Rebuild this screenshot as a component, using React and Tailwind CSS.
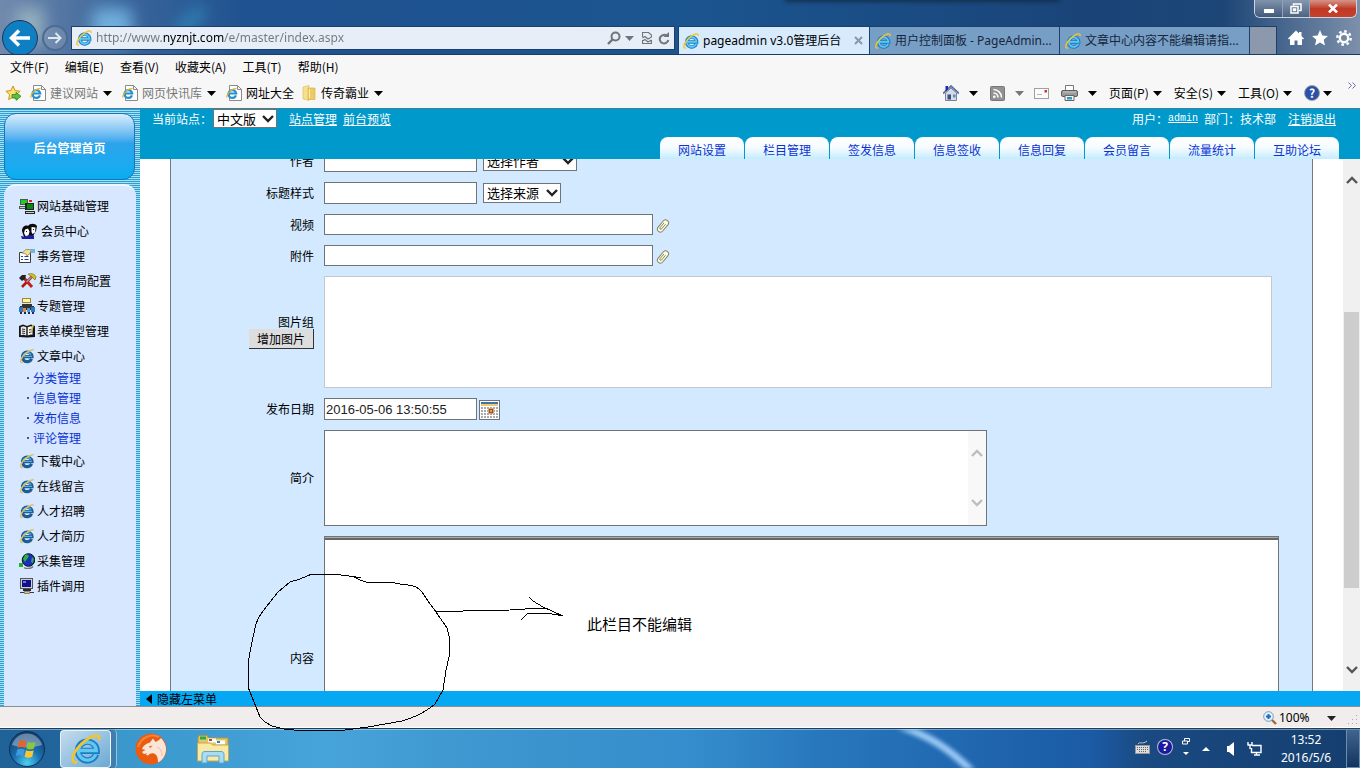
import { useEffect, useId, useRef } from 'react';

const MENUS = ['文件(F)', '编辑(E)', '查看(V)', '收藏夹(A)', '工具(T)', '帮助(H)'];

const NAV_TABS = ['网站设置', '栏目管理', '签发信息', '信息签收', '信息回复', '会员留言', '流量统计', '互助论坛'];

const SIDE_MENU = [
  { label: '网站基础管理', icon: ComputersIcon },
  { label: '会员中心', icon: FacesIcon },
  { label: '事务管理', icon: HandSheetIcon },
  { label: '栏目布局配置', icon: ToolsIcon },
  { label: '专题管理', icon: MeetingIcon },
  { label: '表单模型管理', icon: BookIcon },
  { label: '文章中心', icon: SideIeIcon, children: ['分类管理', '信息管理', '发布信息', '评论管理'] },
  { label: '下载中心', icon: SideIeIcon },
  { label: '在线留言', icon: SideIeIcon },
  { label: '人才招聘', icon: SideIeIcon },
  { label: '人才简历', icon: SideIeIcon },
  { label: '采集管理', icon: GlobeIcon },
  { label: '插件调用', icon: TerminalIcon },
];

/* ---------- icons ---------- */

function Caret({ className = 'text-black' }) {
  return (
    <svg viewBox="0 0 9 5" className={`h-[5px] w-[9px] shrink-0 ${className}`} fill="currentColor">
      <path d="M0 0h9L4.500 5z" />
    </svg>
  );
}

function Chevron({ up = false, className }) {
  return (
    <svg viewBox="0 0 12 8" className={`h-2 w-3 ${className}`} fill="none" stroke="currentColor" strokeWidth="2.400">
      <path d={up ? 'M1 7l5-5 5 5' : 'M1 1l5 5 5-5'} />
    </svg>
  );
}

function IeIcon({ className = 'size-4' }) {
  return (
    <svg viewBox="0 0 16 16" className={`shrink-0 ${className}`} fill="none">
      <path d="M13.400 10.800A5 5 0 1 1 13.700 9H4.500" stroke="#1a7dc4" strokeWidth="3.400" />
      <path d="M13.200 10.800A4.800 4.800 0 1 1 13.500 8.800H4.500" stroke="#62c6f2" strokeWidth="1.800" />
      <path d="M3.200 15C1.200 15.600.6 14.400 1 12.400 2 8 8 2.200 12.600 1c2-.5 2.800.4 2.400 2.200" stroke="#f3c52b" strokeWidth="1.400" />
    </svg>
  );
}

function SideIeIcon() {
  return (
    <svg viewBox="0 0 16 16" className="size-4" fill="none">
      <path d="M12.600 10.800A4.800 4.800 0 1 1 13 8.600H5" stroke="#1d5d94" strokeWidth="3.200" />
      <path d="M12 6.600A4.600 4.600 0 0 0 4 7.400M5 8.400h8" stroke="#58aee0" strokeWidth="1.400" />
      <path d="M4 14.400c-2.400.6-2.800-1-2-3C3.600 7.400 9 2.600 14.600 1.600" stroke="#dcc36a" strokeWidth="1.500" />
    </svg>
  );
}

function PageIeIcon() {
  return (
    <svg viewBox="0 0 16 16" className="size-4 shrink-0" fill="none">
      <path d="M3.500 .5h8l4 4v11h-12z" fill="#fff" stroke="#8a8a8a" />
      <path d="M11.500 .5v4h4" stroke="#8a8a8a" />
      <path d="M10 10.400A3.900 3.900 0 1 1 10.200 8.500H3" stroke="#2490d0" strokeWidth="2.200" />
      <path d="M1 12.600C0 9 6 3.400 10.500 3.400" stroke="#e2b62c" strokeWidth="1.200" />
    </svg>
  );
}

function FavStarIcon() {
  return (
    <svg viewBox="0 0 17 16" className="h-4 w-[17px]">
      <path d="M8 1l2.100 4.600 5 .6-3.700 3.400 1 5L8 12.200l-4.400 2.400 1-5L.9 6.200l5-.6z" fill="#ffe070" stroke="#c9961a" />
      <path d="M7 9.500h4v-2.200l5 4-5 4V13H7z" fill="#59c13c" stroke="#2c8a1e" strokeWidth=".8" />
    </svg>
  );
}

function FolderIcon() {
  return (
    <svg viewBox="0 0 14 16" className="h-4 w-3.5">
      <path d="M1 2l6-1.500V15.500L1 14z" fill="#f7e08c" stroke="#dcb850" strokeWidth=".6" />
      <path d="M6 3h7v11.500H6z" fill="#eccb63" stroke="#d5ad48" strokeWidth=".6" />
      <path d="M7.500 4v9" stroke="#fff2bd" />
    </svg>
  );
}

function HouseIcon() {
  return (
    <svg viewBox="0 0 16 16" className="size-4">
      <path d="M2.500 8L8 3l5.500 5v7.500h-11z" fill="#d6dbe5" stroke="#7a8498" />
      <path d="M0 8.500L8 1l8 7.500" fill="none" stroke="#5d74a0" strokeWidth="1.800" />
      <path d="M2.500 1h2.500v3.500l-2.500 2z" fill="#1e28b8" />
      <path d="M4.500 9.500H8v5H4.500z" fill="#38507a" />
      <path d="M10 9.500h2.500v3H10z" fill="#4e94c8" />
    </svg>
  );
}

function RssIcon() {
  return (
    <svg viewBox="0 0 15 15" className="size-[15px]" fill="none" stroke="#fff">
      <rect x=".5" y=".5" width="14" height="14" rx="1" fill="#929292" stroke="#777" />
      <path d="M3.500 3.500a8 8 0 0 1 8 8M3.500 7a4.500 4.500 0 0 1 4.500 4.500" strokeWidth="1.600" />
      <circle cx="4.300" cy="10.800" r="1.300" fill="#fff" stroke="none" />
    </svg>
  );
}

function MailIcon() {
  return (
    <svg viewBox="0 0 15 11" className="h-[11px] w-[15px]">
      <rect x=".5" y=".5" width="14" height="10" fill="#fbfbfb" stroke="#a0a0a0" />
      <path d="M10.500 2h2.500v2.500h-2.500z" fill="#cf3434" />
      <path d="M3 6.500h5" stroke="#b4b4c8" />
    </svg>
  );
}

function PrinterIcon() {
  return (
    <svg viewBox="0 0 17 16" className="h-4 w-[17px]">
      <path d="M4.500 .5h8v6h-8z" fill="#fff" stroke="#777" />
      <rect x=".5" y="5.500" width="16" height="6" rx="1.500" fill="#9b9b9b" stroke="#5e5e5e" />
      <path d="M2 7h13" stroke="#c8c8c8" />
      <path d="M4 10.500h9v5H4z" fill="#eef5f8" stroke="#666" />
      <path d="M6 12h5v2.500H6z" fill="#2f9bb9" />
    </svg>
  );
}

function HelpBadge({ className }) {
  return (
    <span
      className={`flex size-4 items-center justify-center rounded-full border text-[12px] leading-none font-bold text-white ${className}`}
    >
      ?
    </span>
  );
}

function ComputersIcon() {
  return (
    <svg viewBox="0 0 16 16" className="size-4" shapeRendering="crispEdges">
      <path d="M1 1h8v6H1zM0 8h7v3H0z" fill="#555" />
      <path d="M2 2h6v4H2z" fill="#1ed01e" />
      <path d="M10 2h3v2h-3z" fill="#e02020" />
      <path d="M6 5h9v7H6zM6 13h10v3H6z" fill="#222" />
      <path d="M8 6h6v5H8z" fill="#0a8a0a" />
      <path d="M7 14h8v1H7zM1 9h5v1H1z" fill="#cfcfcf" />
    </svg>
  );
}

function FacesIcon() {
  return (
    <svg viewBox="0 0 20 16" className="h-4 w-5">
      <g transform="translate(2 0)">
        <path d="M1 8C1 4 4 1.500 7 3c2-3 7-3 9 0l-1 5-3 5-9 1z" fill="#0b0b0b" />
        <path d="M4 6.500l3-1 1.500 3-1 4-3 .5L3 10zM10.500 4l4 .5-.5 5-2.500 1.500-1-2z" fill="#fff" />
        <path d="M0 13l5 1 3-2 5 .5V16H1z" fill="#1c1ca8" />
        <path d="M12 6h1v1h-1zM5 8h1v1H5z" fill="#111" />
      </g>
    </svg>
  );
}

function HandSheetIcon() {
  return (
    <svg viewBox="0 0 16 16" className="size-4">
      <path d="M.5 4.500h11v10H.5z" fill="#fff" stroke="#3c3c3c" />
      <path d="M2 8.500h2M5.500 8.500h4M2 11.500h2M5.500 11.500h4" stroke="#1f3fa8" strokeWidth="1.200" />
      <path d="M3 5l4-3.500h5l-1 4-3 2.500-1-2z" fill="#f3dc98" stroke="#8d7a3c" strokeWidth=".7" />
      <path d="M11 1h5v4h-4z" fill="#6cb7dd" />
    </svg>
  );
}

function ToolsIcon() {
  return (
    <svg viewBox="0 0 18 16" className="h-4 w-[18px]" fill="none">
      <path d="M5 5l8 9" stroke="#c31f1f" strokeWidth="3" />
      <path d="M13 3.500L3 14" stroke="#b01818" strokeWidth="2.600" />
      <path d="M12.500 4L7.500 9" stroke="#9c9c9c" strokeWidth="1.600" />
      <path d="M0 5l3-3h4l-1 4-3 2z" fill="#222" />
      <path d="M9 1c4-1 7 0 8 3l-1 3-3-3z" fill="#d3c021" stroke="#6d6410" strokeWidth=".6" />
    </svg>
  );
}

function MeetingIcon() {
  return (
    <svg viewBox="0 0 16 16" className="size-4" shapeRendering="crispEdges">
      <path d="M3 0h9v5H3z" fill="#a08a20" />
      <path d="M4 1h7v3H4z" fill="#fff3a8" />
      <path d="M3 6h10v2H3zM1 8h14v4H1z" fill="#333" />
      <path d="M0 9h4v5H0zM12 9h4v5h-4z" fill="#2f78c4" />
      <path d="M4 10h3v4H4z" fill="#e08a2c" />
      <path d="M8 10h3v4H8z" fill="#4a9cd8" />
      <path d="M1 14h2v2H1zM5 14h2v2H5zM9 14h2v2H9zM13 14h2v2h-2z" fill="#1d2a55" />
    </svg>
  );
}

function BookIcon() {
  return (
    <svg viewBox="0 0 16 16" className="size-4">
      <path d="M0 3l4-1.500L8 3l4-1.500L16 3v11l-8 .5L0 14z" fill="#151515" />
      <path d="M1.800 4l2.700-.8 2.800 1v8.300l-2.800-.8-2.700.6z" fill="#e6e6e6" />
      <path d="M8.700 4.200l3-1 1.800.5v8l-1.800-.3-3 1z" fill="#f5f5f5" />
      <path d="M3 6l3 .5M3 8l3 .5M3 10l3 .5M10 7l2.500-.5M10 9.500l2.500-.5" stroke="#333" />
      <path d="M13 2l2 .5-2.500 7-1 .8z" fill="#d8c13c" />
    </svg>
  );
}

function GlobeIcon() {
  return (
    <svg viewBox="0 0 16 16" className="size-4">
      <circle cx="9.500" cy="7" r="6.300" fill="#1a2ec0" stroke="#111" />
      <path d="M6 2c2-1 3 0 4 1L8 6l-2 3-2-3zM13 4l2 2-1 4-2-1z" fill="#27b53a" />
      <path d="M5 14.500c2 1.500 7 1.500 9-1" stroke="#777" strokeWidth="1.500" fill="none" />
      <path d="M0 10h4v4H0z" fill="#23b02e" />
    </svg>
  );
}

function TerminalIcon() {
  return (
    <svg viewBox="0 0 16 16" className="size-4" shapeRendering="crispEdges">
      <path d="M1 0h13v11H1z" fill="#555" />
      <path d="M2 1h11v9H2z" fill="#d0d0d0" />
      <path d="M3 2h9v7H3z" fill="#10108c" />
      <path d="M4 3h3v2H4z" fill="#5f7be0" />
      <path d="M4 11h8v2H4z" fill="#2b2b2b" />
      <path d="M7 13h2v1H7zM1 14h14v1H1z" fill="#3a3a3a" />
      <path d="M5 13h6v3H5z" fill="#888" />
      <path d="M6 14h4v1H6z" fill="#d8d048" />
    </svg>
  );
}

function ClipIcon() {
  return (
    <svg viewBox="0 0 14 14" className="size-3.5" fill="none" stroke="#84846a">
      <g transform="rotate(40 7 7)">
        <rect x="4" y="0" width="6" height="14" rx="3" fill="#fdfce0" />
        <path d="M7.800 4v6.500a1.200 1.200 0 0 1-2 0V4" strokeWidth=".9" />
      </g>
    </svg>
  );
}

function CalendarIcon() {
  return (
    <svg viewBox="0 0 21 20" className="h-5 w-[21px]" shapeRendering="crispEdges">
      <path d="M0 0h21v20H0z" fill="#6b7378" />
      <path d="M1 1h19v18H1z" fill="#fff" />
      <path d="M2 2h17v2H2z" fill="#3e74a8" />
      <path d="M2 4h17v2H2z" fill="#eccb74" />
      <path d="M2 8h17M2 11h17M2 14h17M2 17h17" stroke="#aaa" strokeWidth="2" strokeDasharray="2 1" />
      <path d="M9 8h6v6H9z" fill="#dfa070" />
      <path d="M10 9h4v4h-4z" fill="#8a5630" />
      <path d="M11 10h2v2h-2z" fill="#dfa070" />
    </svg>
  );
}

function WindowsOrb() {
  return (
    <svg viewBox="0 0 38 38" className="size-[38px]">
      <defs>
        <radialGradient id="orb" cx=".5" cy=".9" r=".9">
          <stop offset="0" stopColor="#4cd0f4" />
          <stop offset=".45" stopColor="#1a6fae" />
          <stop offset="1" stopColor="#123a66" />
        </radialGradient>
      </defs>
      <circle cx="19" cy="19" r="17.500" fill="url(#orb)" stroke="#0e2f52" />
      <path d="M4 15a15.500 15.500 0 0 1 30 0c-9 3-21 3-30 0z" fill="#fff" opacity=".35" />
      <path d="M11 11.500c3-1.600 5-1.400 7.300-.2L17 18c-2.600-1.200-4.700-1.200-7.400 0z" fill="#e8622a" />
      <path d="M19.800 11.800c2.700 1.200 5 1.200 7.700.1L26 18.600c-2.600 1.200-5 1.200-7.600 0z" fill="#8cc63e" />
      <path d="M9.200 19.600c2.700-1.200 4.800-1.200 7.400 0l-1.400 6.500c-2.600-1.200-4.700-1.200-7.300 0z" fill="#3d9be0" />
      <path d="M18 20.200c2.700 1.200 5 1.200 7.700 0l-1.500 6.600c-2.600 1.200-5 1.200-7.600 0z" fill="#fbc62f" />
    </svg>
  );
}

function CheetahIcon() {
  return (
    <svg viewBox="0 0 32 32" className="size-8">
      <circle cx="16" cy="16" r="15.500" fill="#ea5d10" />
      <path d="M3 14C6 5 15 0 24 4" stroke="#f9a05a" strokeWidth="2" fill="none" opacity=".6" />
      <path
        d="M31 16c0 6-3 11-8 13.500 0-5-1-8-4-9-3-.5-4 0-6 2l-2-.5 1-2-2 1c-2 0-3-1-2.500-2.500l3-1.500-3.500-1c1-3 4-5.500 8-6.500l3-4 2.500 3.500C25 7 26 5 26 5c3 3 5 7 5 11z"
        fill="#fbe5d6"
      />
      <path d="M13.500 13.500l4-1-2 2.500z" fill="#e0701e" />
      <path d="M22 14c3 1 5 4 5 9" stroke="#f3bd98" fill="none" />
    </svg>
  );
}

function ExplorerIcon() {
  return (
    <svg viewBox="0 0 34 30" className="h-[30px] w-[34px]">
      <path d="M2 4l1-2.500h8L12.500 4H32v22H2z" fill="#e3c765" stroke="#b4953c" />
      <path d="M4 2.500h6v3H4z" fill="#2ea84c" />
      <path d="M12 4.500h8v4h-8z" fill="#fff" />
      <path d="M13 5h3v2h-3z" fill="#c8402c" />
      <path d="M20 6.500h9v4h-9z" fill="#fff" />
      <path d="M21 7h3v2h-3z" fill="#2d7fc6" />
      <path d="M1.500 9h13l2 2h16v16h-31z" fill="#fae9a4" stroke="#c6a850" />
      <path d="M6 29v-8.500c0-2 1-3 3-3h16c2 0 3 1 3 3V29h-5v-7H11v7z" fill="#a8dcf3" stroke="#5ba6cc" />
    </svg>
  );
}

/* ---------- browser chrome ---------- */

function WindowButtons() {
  return (
    <div className="flex h-[18px] overflow-hidden rounded-b-md border border-t-0 border-slate-300 text-white">
      <button aria-label="最小化" className="flex w-7 items-center justify-center border-r border-slate-400 bg-linear-to-b from-[#8093ac] to-[#42597a]">
        <span className="mt-1 h-1 w-2.5 bg-white" />
      </button>
      <button aria-label="还原" className="flex w-[27px] items-center justify-center border-r border-slate-400 bg-linear-to-b from-[#8598af] to-[#4c6380]">
        <svg viewBox="0 0 12 11" className="h-[11px] w-3" fill="none" stroke="#fff" strokeWidth="1.500">
          <path d="M3.500 2.500V1h7.500v6.500H9M1 3.500h7v6.500H1zM3.500 6h2v1.500h-2z" />
        </svg>
      </button>
      <button aria-label="关闭" className="flex w-[46px] items-center justify-center bg-linear-to-b from-[#d5938a] via-[#bf3a26] to-[#c8402c]">
        <svg viewBox="0 0 10 9" className="h-[9px] w-2.5" stroke="#fff" strokeWidth="2.500">
          <path d="M1 .5l8 8M9 .5l-8 8" />
        </svg>
      </button>
    </div>
  );
}

function TitleBar() {
  return (
    <header className="relative h-[55px] overflow-hidden border-b border-[#1c3a63] bg-[linear-gradient(to_right,#7089ad_0%,#3f689c_8%,#1f5290_18%,#1b5590_50%,#1a4478_80%,#1d4677_90%,#7d90aa_100%)] font-['Noto_Sans','Noto_Sans_CJK_SC',sans-serif]">
      <div className="absolute top-2 left-4 h-9 w-7 bg-[#a9c4c8]/70 blur-sm" />
      <div className="absolute top-2 left-[92px] h-9 w-10 rounded-lg bg-[#7cc0ec]/80 blur-sm" />
      <div className="absolute top-4 left-[172px] h-3 w-9 -rotate-45 bg-[#2f86bb] blur-sm" />
      <div className="absolute -top-1 left-[785px] h-1.5 w-[275px] bg-[#12304f] blur-[2px]" />
      <div className="relative flex h-[18px] justify-end pr-[3px]">
        <WindowButtons />
      </div>
      <div className="relative flex h-9 pl-0.5">
        <button aria-label="后退" className="mt-[2px] flex size-9 items-center justify-center rounded-full border border-[#235] bg-[#0d7fc2]">
          <svg viewBox="0 0 22 18" className="h-[18px] w-[22px]" fill="none" stroke="#fff" strokeWidth="3.500">
            <path d="M21 9H3M10 1.500L2.500 9l7.500 7.500" />
          </svg>
        </button>
        <button aria-label="前进" className="mt-[7px] ml-1 flex size-[26px] items-center justify-center rounded-full border-2 border-[#4d6a90] bg-[#7b92b2]/60">
          <svg viewBox="0 0 14 12" className="h-3 w-3.5" fill="none" stroke="#dfe6ee" strokeWidth="2">
            <path d="M0 6h12M7.500 1l5 5-5 5" />
          </svg>
        </button>
        <div className="mt-2 ml-[3px] flex h-6 flex-1 items-center gap-1 border border-[#1c3f6c] bg-[#e8eef7] px-1 text-[#707579]">
          <IeIcon />
          <input
            aria-label="地址"
            defaultValue="http://www.nyznjt.com/e/master/index.aspx"
            className="min-w-0 flex-1 bg-[linear-gradient(to_right,#73777c_66px,#000_66px,#000_128px,#73777c_128px)] bg-clip-text text-xs text-transparent outline-none"
          />
          <svg viewBox="0 0 14 14" className="size-3.5" fill="none" stroke="currentColor" strokeWidth="2">
            <circle cx="8.500" cy="5.500" r="4" />
            <path d="M5.500 8.500L1 13" strokeWidth="2.400" />
          </svg>
          <Caret className="w-[7px] text-[#707579]" />
          <svg viewBox="0 0 10 12" className="ml-1 h-3 w-2.5" fill="none" stroke="currentColor">
            <path d="M.5 5V.5h6l3 2.500v2M.5 8v3.500h9V8M.5 6l2.500-1.500L6 7l3.500-2M.5 9L3 7.500l3 2.500 3.500-2" strokeWidth="1.200" />
          </svg>
          <svg viewBox="0 0 12 13" className="ml-0.5 h-[13px] w-3" fill="none" stroke="currentColor" strokeWidth="2">
            <path d="M9 4A4.300 4.300 0 1 0 10.300 8" />
            <path d="M5.500 5h5.500V0z" fill="currentColor" stroke="none" />
          </svg>
        </div>
        <div className="mt-2 ml-[3px] flex h-7 text-xs">
          <div className="flex w-[192px] items-center gap-1 border border-b-0 border-[#1c3f6c] bg-[#d7ebfd] pr-1.5 pl-1">
            <IeIcon />
            <span className="flex-1 truncate">pageadmin v3.0管理后台</span>
            <button aria-label="关闭标签" className="text-[#8a97a5]">
              <svg viewBox="0 0 9 9" className="size-[9px]" stroke="currentColor" strokeWidth="2">
                <path d="M1 1l7 7M8 1L1 8" />
              </svg>
            </button>
          </div>
          <div className="flex w-[190px] items-center gap-1 border-t border-r border-[#1c3f6c] bg-[#779fc6] pr-1 pl-[5px] text-[#16263c]">
            <IeIcon />
            <span className="truncate">用户控制面板 - PageAdmin...</span>
          </div>
          <div className="flex w-[190px] items-center gap-1 border-t border-r border-[#1c3f6c] bg-[#779fc6] pr-1 pl-[5px] text-[#16263c]">
            <IeIcon />
            <span className="truncate">文章中心内容不能编辑请指...</span>
          </div>
          <button aria-label="新标签" className="w-[27px] border-t border-r border-[#1c3f6c] bg-[#8c98ac]" />
        </div>
        <div className="mt-2 mr-2 ml-[11px] flex h-6 items-center gap-2 text-white">
          <svg viewBox="0 0 16 16" className="size-4" fill="currentColor">
            <path d="M8 .5l3 3V2h2.500v4L16 8.500l-1 1-1-.9V15H9.500v-4.500h-3V15H2V8.600l-1 .9-1-1z" />
          </svg>
          <svg viewBox="0 0 16 16" className="size-4" fill="currentColor">
            <path d="M8 0l2.300 5.400 5.700.5-4.300 3.900L13 15.500l-5-3-5 3 1.300-5.700L0 5.900l5.700-.5z" />
          </svg>
          <svg viewBox="0 0 16 16" className="size-4" fill="none" stroke="currentColor">
            <circle cx="8" cy="8" r="4.200" strokeWidth="2.400" />
            <circle cx="8" cy="8" r="6.700" strokeWidth="2.400" strokeDasharray="2.600 2.660" />
          </svg>
        </div>
      </div>
    </header>
  );
}

function MenuBars() {
  return (
    <div className="h-[54px] border-b border-[#3a8199] bg-[#f7f7f7] font-['Noto_Sans_CJK_SC',sans-serif] text-xs">
      <nav className="flex h-6 items-center gap-4 pl-2.5">
        {MENUS.map((m) => (
          <button key={m}>{m}</button>
        ))}
      </nav>
      <div className="flex h-7 items-center pl-[5px]">
        <FavStarIcon />
        <div className="ml-2 flex gap-2.5">
          <button className="flex items-center gap-1 text-[#777]">
            <PageIeIcon />
            建议网站
            <Caret className="ml-px text-black" />
          </button>
          <button className="flex items-center gap-1 text-[#777]">
            <PageIeIcon />
            网页快讯库
            <Caret className="ml-px text-black" />
          </button>
          <button className="flex items-center gap-1">
            <PageIeIcon />
            网址大全
          </button>
        </div>
        <button className="ml-2 flex items-center gap-[5px]">
          <FolderIcon />
          传奇霸业
          <Caret />
        </button>
        <div className="flex-1" />
        <div className="flex items-center gap-3">
          <div className="flex items-center gap-2.5">
            <HouseIcon />
            <Caret className="w-2" />
          </div>
          <div className="flex items-center gap-2.5">
            <RssIcon />
            <Caret className="w-2 text-[#777]" />
            <MailIcon />
          </div>
          <div className="flex items-center gap-2.5">
            <PrinterIcon />
            <Caret className="w-2" />
          </div>
          <button className="flex items-center gap-1">
            页面(P) <Caret className="w-2" />
          </button>
          <button className="flex items-center gap-1">
            安全(S) <Caret className="w-2" />
          </button>
          <button className="flex items-center gap-1">
            工具(O) <Caret className="w-2" />
          </button>
          <div className="flex items-center gap-[3px]">
            <HelpBadge className="border-[#9aa] bg-[#2c4fa8]" />
            <Caret className="w-2" />
          </div>
        </div>
        <svg viewBox="0 0 8 7" className="mr-1 mb-4 ml-4 h-[7px] w-2" fill="none" stroke="#6a6aa8">
          <path d="M.5.5l3 3-3 3M4.500.5l3 3-3 3" />
        </svg>
      </div>
    </div>
  );
}

/* ---------- admin page ---------- */

function Sidebar() {
  return (
    <aside className="flex w-[140px] shrink-0 flex-col bg-[repeating-linear-gradient(to_bottom,#2d9fd6_0px,#2d9fd6_1px,#a9e0f2_1px,#a9e0f2_2px)] px-1 pt-1">
      <a
        href="#home"
        className="mr-px flex h-[67px] items-center justify-center rounded-xl border border-[#1b74b8] bg-linear-to-b from-[#d9effc] via-[#2ba4ec] via-45% to-[#05aef2] pt-0.5 text-xs font-bold text-white"
      >
        后台管理首页
      </a>
      <nav className="mt-1 flex-1 rounded-t-xl border-t-2 border-[#eef6ff] bg-[#d6e7ff] pt-[7px] pl-[15px] text-xs">
        {SIDE_MENU.map(({ label, icon: Icon, children }) => (
          <div key={label}>
            <a href="#menu" className="flex h-[25px] items-center gap-0.5">
              <Icon />
              {label}
            </a>
            {children?.map((c) => (
              <a key={c} href="#sub" className="flex h-5 items-center gap-1 pl-2 text-[#0a32d2]">
                <span className="size-0.5 bg-[#556]" />
                {c}
              </a>
            ))}
          </div>
        ))}
      </nav>
    </aside>
  );
}

function Select({ label, options, className }) {
  return (
    <div className={`relative ${className}`}>
      <select
        aria-label={label}
        className="block size-full appearance-none border border-[#6f7478] bg-white pl-[3px] text-[13px] leading-4 text-black"
      >
        {options.map((o) => (
          <option key={o}>{o}</option>
        ))}
      </select>
      <Chevron className="pointer-events-none absolute top-1.5 right-[3px] text-[#222]" />
    </div>
  );
}

function PageHeader() {
  return (
    <div className="flex h-[50px] flex-col justify-between bg-[#0099cc] text-xs text-white">
      <div className="flex h-[19px] items-center pl-3">
        <span className="w-[61px]">当前站点：</span>
        <Select label="当前站点" options={['中文版']} className="h-[19px] w-16" />
        <a href="#site" className="ml-3 underline">站点管理</a>
        <a href="#preview" className="ml-1.5 underline">前台预览</a>
        <div className="ml-auto flex items-center pr-6">
          用户：
          <a href="#user" className="font-['Liberation_Mono',monospace] text-[10px] underline">admin</a>
          <span className="ml-1.5">部门：技术部</span>
          <a href="#logout" className="ml-3 underline">注销退出</a>
        </div>
      </div>
      <nav className="flex justify-end gap-px pr-[21px]">
        {NAV_TABS.map((t) => (
          <a
            key={t}
            href="#tab"
            className="flex h-[22px] w-[84px] items-center justify-center rounded-t-lg bg-linear-to-b from-white via-[#f4fbff] to-[#c4ecff] pt-1 text-[#0a32d2]"
          >
            {t}
          </a>
        ))}
      </nav>
    </div>
  );
}

function Row({ label, htmlFor, extra, children }) {
  return (
    <div className="flex">
      <div className="flex w-[153px] shrink-0 flex-col items-end justify-center pr-2.5">
        <label htmlFor={htmlFor} className="leading-3.5">{label}</label>
        {extra}
      </div>
      {children}
    </div>
  );
}

const field = 'border border-[#6f7478] bg-white';

function ArticleForm() {
  const id = useId();
  return (
    <form className="mx-[30px] flex flex-col gap-2.5 border-x border-[#72797f] bg-[#d2e9ff] text-xs">
      <Row label="作者" htmlFor={`${id}-author`}>
        <input id={`${id}-author`} className={`${field} h-[22px] w-[153px]`} />
        <Select label="选择作者" options={['选择作者']} className="ml-1.5 h-5 w-[94px] self-center" />
      </Row>
      <Row label="标题样式" htmlFor={`${id}-style`}>
        <input id={`${id}-style`} className={`${field} h-[22px] w-[153px]`} />
        <Select label="选择来源" options={['选择来源']} className="ml-1.5 h-5 w-[78px] self-center" />
      </Row>
      <Row label="视频" htmlFor={`${id}-video`}>
        <input id={`${id}-video`} className={`${field} h-[21px] w-[329px]`} />
        <button type="button" aria-label="上传视频" className="ml-[3px] self-end pb-0.5">
          <ClipIcon />
        </button>
      </Row>
      <Row label="附件" htmlFor={`${id}-file`}>
        <input id={`${id}-file`} className={`${field} h-[21px] w-[329px]`} />
        <button type="button" aria-label="上传附件" className="ml-[3px] self-end pb-0.5">
          <ClipIcon />
        </button>
      </Row>
      <Row
        label="图片组"
        extra={
          <button type="button" className="h-5 w-[65px] border-r border-b border-[#333] bg-[#dddddd] leading-none">
            增加图片
          </button>
        }
      >
        <div className="mr-10 h-28 flex-1 border border-[#c3c9ce] bg-white" />
      </Row>
      <Row label="发布日期" htmlFor={`${id}-date`}>
        <input
          id={`${id}-date`}
          defaultValue="2016-05-06 13:50:55"
          className={`${field} h-[22px] w-[153px] px-px font-['Liberation_Sans',sans-serif] text-[13px] text-[#222]`}
        />
        <button type="button" aria-label="选择日期" className="ml-0.5 self-end">
          <CalendarIcon />
        </button>
      </Row>
      <Row label="简介" htmlFor={`${id}-intro`}>
        <div className={`${field} flex h-24 w-[663px]`}>
          <textarea id={`${id}-intro`} className="flex-1 resize-none outline-none" />
          <div className="flex w-[18px] flex-col items-center justify-between bg-[#f8f8f8] py-[18px]">
            <Chevron up className="text-[#bdbdbd]" />
            <Chevron className="text-[#bdbdbd]" />
          </div>
        </div>
      </Row>
      <Row label="内容" htmlFor={`${id}-content`}>
        <div className={`${field} mr-[33px] flex h-[244px] flex-1 flex-col`}>
          <div className="h-[3px] border-b-2 border-[#666] bg-[#aaa]" />
          <textarea id={`${id}-content`} readOnly className="flex-1 resize-none outline-none" />
        </div>
      </Row>
    </form>
  );
}

function MainPane() {
  const scroller = useRef(null);

  // the form opens slightly scrolled, the first row half under the header
  useEffect(() => {
    scroller.current.scrollTop = 9;
  }, []);

  return (
    <main className="flex min-w-0 flex-1 flex-col">
      <PageHeader />
      <div className="flex min-h-0 flex-1 bg-white">
        <div ref={scroller} className="min-w-0 flex-1 overflow-hidden">
          <ArticleForm />
        </div>
        <div className="flex w-[17px] flex-col items-center bg-[#f0f0f0] py-[17px]">
          <Chevron up className="text-[#555]" />
          <div className="mt-32 h-[276px] w-[15px] bg-[#cdcdcd]" />
          <Chevron className="mt-auto text-[#555]" />
        </div>
      </div>
      <button className="flex h-[15px] items-center gap-[5px] bg-[#06a8f3] pl-1.5 text-xs leading-none">
        <svg viewBox="0 0 6 10" className="h-2.5 w-1.5">
          <path d="M6 0v10L0 5z" />
        </svg>
        隐藏左菜单
      </button>
    </main>
  );
}

/* ---------- bottom bars ---------- */

function StatusBar() {
  return (
    <footer className="flex h-[22px] items-center justify-end border-t border-b border-t-[#8a8f93] border-b-white bg-[#f0edec] pt-0.5 font-['Noto_Sans',sans-serif] text-xs">
      <svg viewBox="0 0 14 14" className="size-3.5" fill="none">
        <circle cx="5.500" cy="5.500" r="4.800" fill="#e6f3fd" stroke="#7799b5" />
        <path d="M5.500 3v5M3 5.500h5" stroke="#1b6cc4" strokeWidth="2" />
        <path d="M9 9l4 4" stroke="#a0693c" strokeWidth="2.400" />
      </svg>
      <span className="ml-0.5 w-12">100%</span>
      <Caret className="w-2 text-[#222]" />
      <svg viewBox="0 0 10 10" className="mt-1 mr-0.5 ml-3 size-2.5" fill="#aaa">
        <path d="M8 0h1v1H8zM8 4h1v1H8zM4 4h1v1H4zM8 8h1v1H8zM4 8h1v1H4zM0 8h1v1H0z" />
      </svg>
    </footer>
  );
}

function Taskbar() {
  return (
    <footer className="relative flex h-10 items-center overflow-hidden border-t border-[#1b3f60] bg-linear-to-r from-[#1f6298] from-0% via-[#2f86c8] via-50% to-[#1b5ba6] to-80% font-['Noto_Sans',sans-serif] text-xs text-white">
      <div className="absolute inset-y-0 left-[115px] w-[700px] bg-linear-to-r from-[#3a97cc] via-[#47a4da] via-30% to-transparent" />
      <div className="absolute inset-y-0 right-0 w-[270px] bg-linear-to-r from-transparent via-[#1a4a82] via-20% to-[#143e6e]" />
      <svg viewBox="0 0 100 40" className="absolute top-0 left-[890px] h-10 w-[100px] blur-[2px]" fill="none" stroke="#9ccaf5" strokeWidth="7">
        <path d="M0-6C40 6 60 20 86 46" />
      </svg>
      <div className="absolute inset-x-0 top-0 h-px bg-white/40" />
      <div className="relative flex flex-1 items-center">
        <button aria-label="开始" className="ml-2">
          <WindowsOrb />
        </button>
        <button
          aria-label="Internet Explorer"
          className="ml-[14px] flex h-[38px] w-[51px] items-center justify-center rounded-sm border border-white/80 bg-linear-to-br from-[#c4dcec] to-[#6aa9d4]"
        >
          <IeIcon className="size-[30px]" />
        </button>
        <div className="h-[38px] w-1.5 rounded-r-sm border-r border-white/50 bg-[#3f7fae]" />
        <button aria-label="猎豹浏览器" className="ml-[18px]">
          <CheetahIcon />
        </button>
        <button aria-label="资源管理器" className="ml-[29px]">
          <ExplorerIcon />
        </button>
      </div>
      <div className="relative flex h-full items-center">
        <svg viewBox="0 0 15 14" className="mb-1 h-3.5 w-[15px]" fill="none">
          <path d="M3 4c2-3 4 1 9-3" stroke="#ccc" />
          <rect x=".5" y="5.500" width="14" height="8" fill="#ddd" stroke="#999" />
          <path d="M2 7.500h11M2 9.500h11M4 11.500h7" stroke="#666" strokeDasharray="1 1" />
        </svg>
        <HelpBadge className="mb-1 ml-[7px] border-white/70 bg-[#1a1a9c]" />
        <svg viewBox="0 0 8 18" className="mb-1 ml-[9px] h-[18px] w-2" fill="none" stroke="#fff">
          <path d="M2.500 3V.5h5v3H5M.5 3h5v3h-5z" />
          <path d="M1 14h6l-3 3z" fill="#fff" stroke="none" />
        </svg>
        <svg viewBox="0 0 8 4" className="ml-3 h-1 w-2" fill="#fff">
          <path d="M4 0l4 4H0z" />
        </svg>
        <svg viewBox="0 0 7 14" className="ml-[17px] h-3.5 w-[7px]" fill="#fff">
          <path d="M0 4h2l5-4v14l-5-4H0z" />
        </svg>
        <svg viewBox="0 0 15 14" className="ml-[13px] h-3.5 w-[15px]" fill="none" stroke="#fff" strokeWidth="1.400">
          <path d="M5 3.500h9v7H4.500V6M7 13h6M9.500 11v2M1 0v3h4V0M3 3v4" />
        </svg>
        <time className="ml-4 flex w-14 flex-col items-center leading-[18px]">
          <span>13:52</span>
          <span>2016/5/6</span>
        </time>
        <button aria-label="显示桌面" className="ml-3 h-full w-3.5 border border-[#6b8db2] bg-linear-to-b from-[#41658f] to-[#12345e]" />
      </div>
    </footer>
  );
}

/* hand drawn remark over the editor */
function Remark() {
  return (
    <div className="pointer-events-none absolute top-[570px] left-[240px] flex">
      <svg viewBox="240 570 330 165" className="h-[165px] w-[330px]" fill="none" stroke="#000" shapeRendering="crispEdges">
        <path d="M436 612L428 601 422 592C418 586 410 585 400 584L390 582 366 582 360 580 354 577 361 578M356 577L341 575 312 574 300 579 290 582 278 592 263 611C258 618 256 622 255 628L251 647 248 663 248 687 256 707 260 717C263 721 268 724 272 726L284 729 294 730 345 730 368 727 402 721C410 719 416 716 422 713 427 710 432 707 435 704L443 690 446 670 449 657 450 640 447 628 436 612" />
        <path d="M436 612L463 611 510 610 525 609 545 608M529 597L533 601 543 607 563 616 547 613 528 613 521 620" />
      </svg>
      <span className="mt-[43px] ml-[17px] font-['Noto_Sans_CJK_SC',sans-serif] text-[15px] leading-[22px]">此栏目不能编辑</span>
    </div>
  );
}

export default function App() {
  return (
    <div className="relative flex h-screen flex-col overflow-hidden font-['Noto_Sans_CJK_SC',sans-serif] text-black">
      <TitleBar />
      <MenuBars />
      <div className="flex min-h-0 flex-1">
        <Sidebar />
        <MainPane />
      </div>
      <StatusBar />
      <Taskbar />
      <Remark />
    </div>
  );
}
